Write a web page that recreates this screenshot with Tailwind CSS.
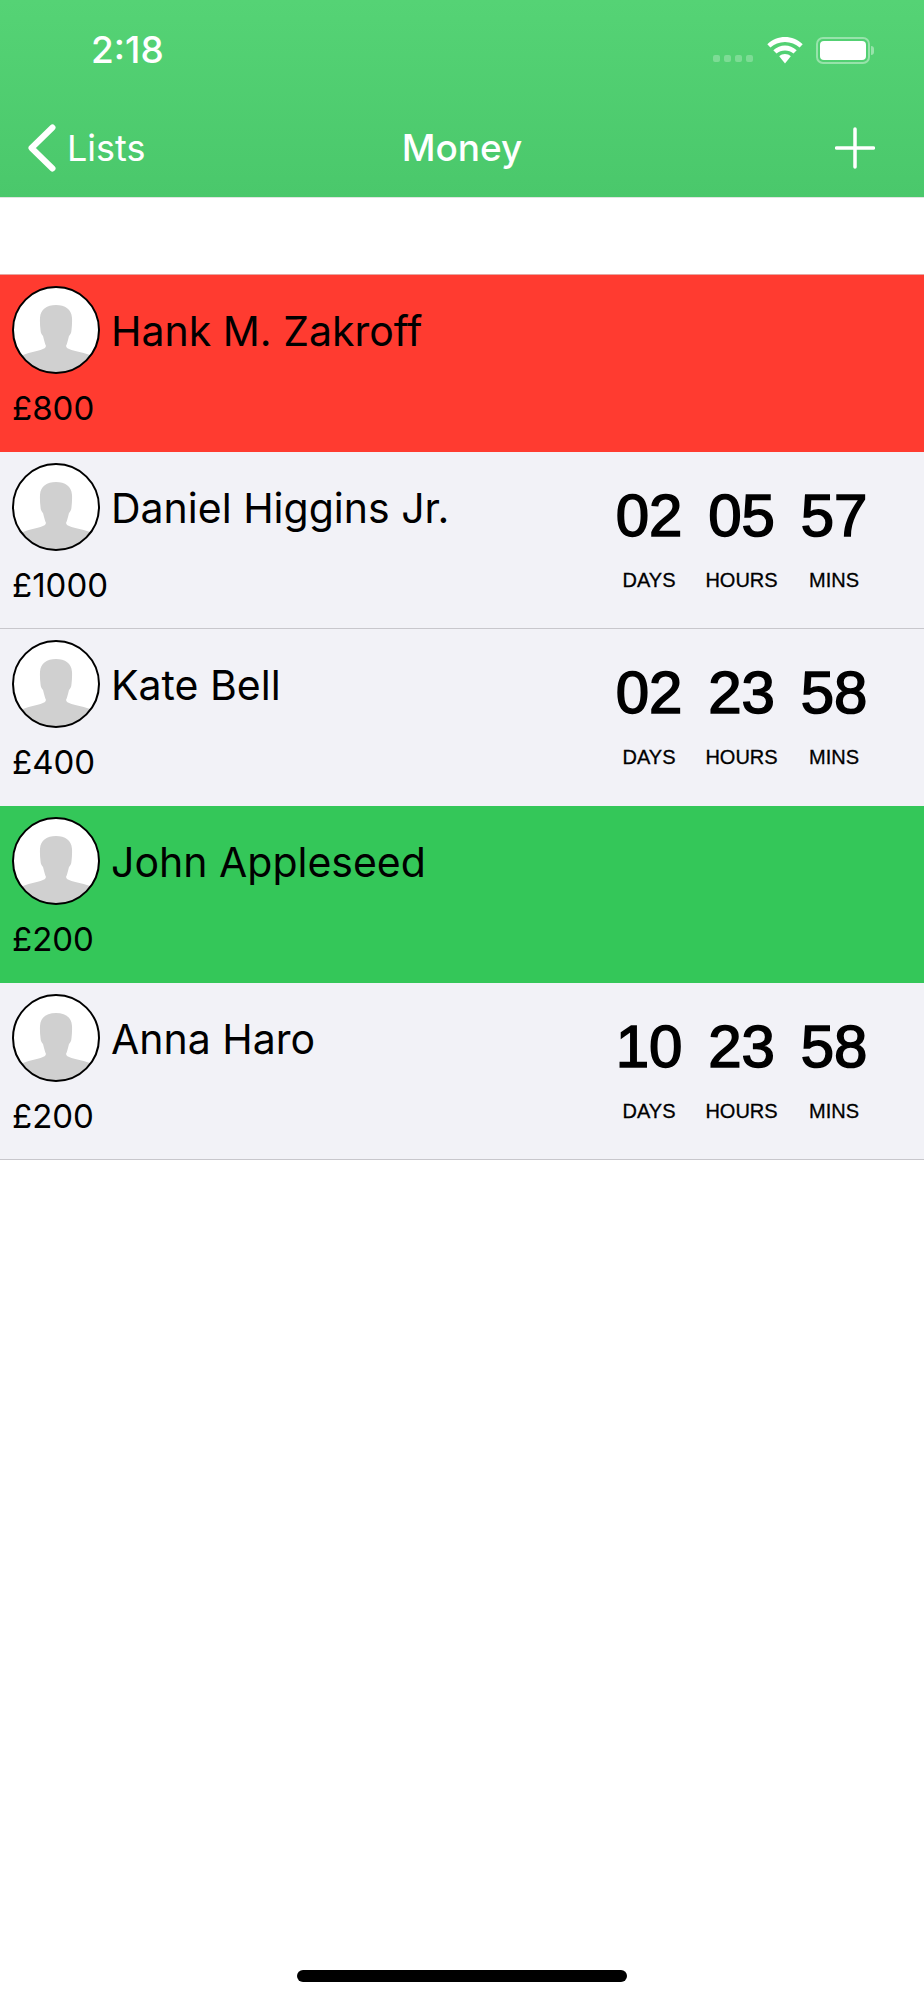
<!DOCTYPE html>
<html lang="en">
<head>
    <meta charset="UTF-8">
    <meta name="viewport" content="width=device-width, initial-scale=1.0">
    <title>Money</title>
    <script src="https://cdn.jsdelivr.net/npm/@tailwindcss/browser@4"></script>
</head>
<body class="bg-white font-['Inter','Noto_Sans',sans-serif] text-black">
<div class="relative w-[924px] h-[2000px] overflow-hidden">

    <!-- Nav bar -->
    <header class="h-[198px] bg-gradient-to-b from-[#55d375] to-[#4ac86b] border-b border-[#dfe5e0] text-white">
        <div class="h-[100px] flex items-start pt-[30px] pl-[91px] pr-[50px]">
            <span class="text-[37px] leading-[40px] font-medium">2:18</span>
            <div class="ml-auto flex items-center h-[40px]">
                <div class="flex gap-[4px] mt-[17px] mr-[14px]">
                    <span class="w-[7px] h-[7px] rounded-[2px] bg-white/25"></span>
                    <span class="w-[7px] h-[7px] rounded-[2px] bg-white/25"></span>
                    <span class="w-[7px] h-[7px] rounded-[2px] bg-white/25"></span>
                    <span class="w-[7px] h-[7px] rounded-[2px] bg-white/25"></span>
                </div>
                <svg class="w-[36px] h-[27px] mr-[13px]" viewBox="0 0 36 27" fill="white">
                    <path d="M18 0C11.500 0 5.500 2.500 0.300 7.200L3.400 10.500C7.200 7.100 12.300 5 18 5S28.800 7.100 32.600 10.500L35.700 7.200C30.500 2.500 24.500 0 18 0Z"/>
                    <path d="M18 8.500C13.800 8.500 9.800 10.100 6.300 13.200L9.500 16.500C11.800 14.500 14.800 13.400 18 13.400S24.200 14.500 26.500 16.500L29.700 13.200C26.200 10.100 22.200 8.500 18 8.500Z"/>
                    <path d="M18 17C15.800 17 13.800 17.800 12.200 19.300L18 26.500L23.800 19.300C22.200 17.800 20.200 17 18 17Z"/>
                </svg>
                <div class="flex items-center">
                    <div class="w-[54px] h-[27px] rounded-[7px] border-[2px] border-white/40 p-[2px]">
                        <div class="w-full h-full rounded-[4px] bg-white"></div>
                    </div>
                    <span class="w-[3px] h-[9px] ml-[1px] rounded-r-[3px] bg-white/40"></span>
                </div>
            </div>
        </div>
        <div class="relative h-[97px] flex items-center justify-between pb-[2px] pl-[28px] pr-[49px]">
            <div class="flex items-center gap-[11px]">
                <svg class="w-[28px] h-[48px]" viewBox="0 0 28 48" fill="none" stroke="white" stroke-width="6" stroke-linecap="round" stroke-linejoin="round">
                    <path d="M24.500 3.500L3.500 24L24.500 44.500"/>
                </svg>
                <span class="text-[36px] leading-[44px] font-normal">Lists</span>
            </div>
            <span class="absolute left-0 right-0 text-center text-[37px] leading-[44px] font-medium">Money</span>
            <svg class="w-[40px] h-[42px]" viewBox="0 0 40 42" fill="none" stroke="white" stroke-width="3.500" stroke-linecap="round">
                <path d="M20 2V40M1.500 21H38.500"/>
            </svg>
        </div>
    </header>

    <!-- Contact list -->
    <main class="pt-[76px]">

        <div class="h-[178px] bg-[#ff3b30] border-t border-[#e6a5a0] flex">
            <div class="flex-1 pl-[12px] pt-[11px]">
                <div class="flex items-center h-[88px]">
                    <svg class="w-[88px] h-[88px] shrink-0" viewBox="0 0 88 88">
                        <clipPath id="a1"><circle cx="44" cy="44" r="43"/></clipPath>
                        <circle cx="44" cy="44" r="43" fill="white"/>
                        <path clip-path="url(#a1)" fill="#d0d0d0" d="M44 19C35 19 28.500 23 28 32C27.800 36 28 40 28.500 44C28.500 47 30 49 31 50C32 54 33 58 34 60L33 62C28 65 18 66 11 69V88H78V69C70 66 60 65 55 62L54 60C55 58 56 54 57 50C58 49 59.500 47 59.500 44C60 40 60.200 36 60 32C59.500 23 53 19 44 19Z"/>
                        <circle cx="44" cy="44" r="43" fill="none" stroke="black" stroke-width="2"/>
                    </svg>
                    <span class="ml-[11px] mt-[2px] text-[41px] leading-[50px] whitespace-nowrap">Hank M. Zakroff</span>
                </div>
                <div class="mt-[14px] text-[33px] leading-[40px]">£800</div>
            </div>
        </div>

        <div class="h-[177px] bg-[#f2f2f7] border-b border-[#c8c7cc] flex">
            <div class="flex-1 pl-[12px] pt-[11px]">
                <div class="flex items-center h-[88px]">
                    <svg class="w-[88px] h-[88px] shrink-0" viewBox="0 0 88 88">
                        <clipPath id="a2"><circle cx="44" cy="44" r="43"/></clipPath>
                        <circle cx="44" cy="44" r="43" fill="white"/>
                        <path clip-path="url(#a2)" fill="#d0d0d0" d="M44 19C35 19 28.500 23 28 32C27.800 36 28 40 28.500 44C28.500 47 30 49 31 50C32 54 33 58 34 60L33 62C28 65 18 66 11 69V88H78V69C70 66 60 65 55 62L54 60C55 58 56 54 57 50C58 49 59.500 47 59.500 44C60 40 60.200 36 60 32C59.500 23 53 19 44 19Z"/>
                        <circle cx="44" cy="44" r="43" fill="none" stroke="black" stroke-width="2"/>
                    </svg>
                    <span class="ml-[11px] mt-[2px] text-[41px] leading-[50px] whitespace-nowrap">Daniel Higgins Jr.</span>
                </div>
                <div class="mt-[14px] text-[33px] leading-[40px]">£1000</div>
            </div>
            <div class="w-[310px] pr-[44px] pt-[31px] font-['Liberation_Sans',sans-serif] grid grid-cols-[92px_93px_92px] justify-end text-center">
                <div><div class="text-[60px] leading-[66px] [-webkit-text-stroke:1.600px_black]">02</div><div class="mt-[19px] text-[20px] leading-[24px] [-webkit-text-stroke:0.300px_black]">DAYS</div></div>
                <div><div class="text-[60px] leading-[66px] [-webkit-text-stroke:1.600px_black]">05</div><div class="mt-[19px] text-[20px] leading-[24px] [-webkit-text-stroke:0.300px_black]">HOURS</div></div>
                <div><div class="text-[60px] leading-[66px] [-webkit-text-stroke:1.600px_black]">57</div><div class="mt-[19px] text-[20px] leading-[24px] [-webkit-text-stroke:0.300px_black]">MINS</div></div>
            </div>
        </div>

        <div class="h-[177px] bg-[#f2f2f7] flex">
            <div class="flex-1 pl-[12px] pt-[11px]">
                <div class="flex items-center h-[88px]">
                    <svg class="w-[88px] h-[88px] shrink-0" viewBox="0 0 88 88">
                        <clipPath id="a3"><circle cx="44" cy="44" r="43"/></clipPath>
                        <circle cx="44" cy="44" r="43" fill="white"/>
                        <path clip-path="url(#a3)" fill="#d0d0d0" d="M44 19C35 19 28.500 23 28 32C27.800 36 28 40 28.500 44C28.500 47 30 49 31 50C32 54 33 58 34 60L33 62C28 65 18 66 11 69V88H78V69C70 66 60 65 55 62L54 60C55 58 56 54 57 50C58 49 59.500 47 59.500 44C60 40 60.200 36 60 32C59.500 23 53 19 44 19Z"/>
                        <circle cx="44" cy="44" r="43" fill="none" stroke="black" stroke-width="2"/>
                    </svg>
                    <span class="ml-[11px] mt-[2px] text-[41px] leading-[50px] whitespace-nowrap">Kate Bell</span>
                </div>
                <div class="mt-[14px] text-[33px] leading-[40px]">£400</div>
            </div>
            <div class="w-[310px] pr-[44px] pt-[31px] font-['Liberation_Sans',sans-serif] grid grid-cols-[92px_93px_92px] justify-end text-center">
                <div><div class="text-[60px] leading-[66px] [-webkit-text-stroke:1.600px_black]">02</div><div class="mt-[19px] text-[20px] leading-[24px] [-webkit-text-stroke:0.300px_black]">DAYS</div></div>
                <div><div class="text-[60px] leading-[66px] [-webkit-text-stroke:1.600px_black]">23</div><div class="mt-[19px] text-[20px] leading-[24px] [-webkit-text-stroke:0.300px_black]">HOURS</div></div>
                <div><div class="text-[60px] leading-[66px] [-webkit-text-stroke:1.600px_black]">58</div><div class="mt-[19px] text-[20px] leading-[24px] [-webkit-text-stroke:0.300px_black]">MINS</div></div>
            </div>
        </div>

        <div class="h-[177px] bg-[#34c759] flex">
            <div class="flex-1 pl-[12px] pt-[11px]">
                <div class="flex items-center h-[88px]">
                    <svg class="w-[88px] h-[88px] shrink-0" viewBox="0 0 88 88">
                        <clipPath id="a4"><circle cx="44" cy="44" r="43"/></clipPath>
                        <circle cx="44" cy="44" r="43" fill="white"/>
                        <path clip-path="url(#a4)" fill="#d0d0d0" d="M44 19C35 19 28.500 23 28 32C27.800 36 28 40 28.500 44C28.500 47 30 49 31 50C32 54 33 58 34 60L33 62C28 65 18 66 11 69V88H78V69C70 66 60 65 55 62L54 60C55 58 56 54 57 50C58 49 59.500 47 59.500 44C60 40 60.200 36 60 32C59.500 23 53 19 44 19Z"/>
                        <circle cx="44" cy="44" r="43" fill="none" stroke="black" stroke-width="2"/>
                    </svg>
                    <span class="ml-[11px] mt-[2px] text-[41px] leading-[50px] whitespace-nowrap">John Appleseed</span>
                </div>
                <div class="mt-[14px] text-[33px] leading-[40px]">£200</div>
            </div>
        </div>

        <div class="h-[177px] bg-[#f2f2f7] border-b border-[#c8c7cc] flex">
            <div class="flex-1 pl-[12px] pt-[11px]">
                <div class="flex items-center h-[88px]">
                    <svg class="w-[88px] h-[88px] shrink-0" viewBox="0 0 88 88">
                        <clipPath id="a5"><circle cx="44" cy="44" r="43"/></clipPath>
                        <circle cx="44" cy="44" r="43" fill="white"/>
                        <path clip-path="url(#a5)" fill="#d0d0d0" d="M44 19C35 19 28.500 23 28 32C27.800 36 28 40 28.500 44C28.500 47 30 49 31 50C32 54 33 58 34 60L33 62C28 65 18 66 11 69V88H78V69C70 66 60 65 55 62L54 60C55 58 56 54 57 50C58 49 59.500 47 59.500 44C60 40 60.200 36 60 32C59.500 23 53 19 44 19Z"/>
                        <circle cx="44" cy="44" r="43" fill="none" stroke="black" stroke-width="2"/>
                    </svg>
                    <span class="ml-[11px] mt-[2px] text-[41px] leading-[50px] whitespace-nowrap">Anna Haro</span>
                </div>
                <div class="mt-[14px] text-[33px] leading-[40px]">£200</div>
            </div>
            <div class="w-[310px] pr-[44px] pt-[31px] font-['Liberation_Sans',sans-serif] grid grid-cols-[92px_93px_92px] justify-end text-center">
                <div><div class="text-[60px] leading-[66px] [-webkit-text-stroke:1.600px_black]">10</div><div class="mt-[19px] text-[20px] leading-[24px] [-webkit-text-stroke:0.300px_black]">DAYS</div></div>
                <div><div class="text-[60px] leading-[66px] [-webkit-text-stroke:1.600px_black]">23</div><div class="mt-[19px] text-[20px] leading-[24px] [-webkit-text-stroke:0.300px_black]">HOURS</div></div>
                <div><div class="text-[60px] leading-[66px] [-webkit-text-stroke:1.600px_black]">58</div><div class="mt-[19px] text-[20px] leading-[24px] [-webkit-text-stroke:0.300px_black]">MINS</div></div>
            </div>
        </div>
    </main>

    <!-- Home indicator -->
    <div class="absolute left-[297px] top-[1970px] w-[330px] h-[12px] rounded-full bg-black"></div>
</div>
</body>
</html>
